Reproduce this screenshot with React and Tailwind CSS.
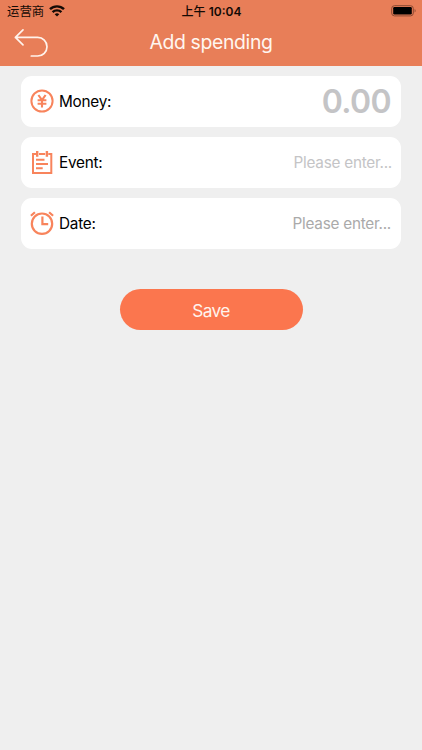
function BackIcon() {
  return (
    <svg className="block h-[30px] w-[36px]" viewBox="0 0 36 30" fill="none" stroke="#fff3ec" strokeWidth="1.7" strokeLinecap="round" strokeLinejoin="round">
      <path d="M9 1.8 1.4 9.4l7.6 7.4M1.4 9.4H23.7a9.3 9.3 0 0 1 0 18.6h-6.4" />
    </svg>
  );
}

function WifiIcon() {
  return (
    <svg className="ml-[5px] block h-[12px] w-[16px]" viewBox="0 0 16 12" fill="none" stroke="#140a05" strokeWidth="2.4">
      <path d="M1 4.2a10 10 0 0 1 14 0" />
      <path d="M3.6 7.2a6.2 6.2 0 0 1 8.8 0" />
      <path d="M8 11.6 5.7 9.3a3.3 3.3 0 0 1 4.6 0Z" fill="#140a05" stroke="none" />
    </svg>
  );
}

function BatteryIcon() {
  return (
    <svg className="block h-[12px] w-[26px]" viewBox="0 0 26 12">
      <rect x="1.7" y="0.7" width="21.6" height="10.2" rx="2.8" fill="none" stroke="#8b4932" />
      <rect x="3.2" y="2.1" width="18.6" height="7.4" rx="1.2" fill="#000" />
      <path d="M24.6 4.1c1.4.6 1.4 2.8 0 3.4Z" fill="#8b4932" />
    </svg>
  );
}

function MoneyIcon() {
  return (
    <svg className="block size-6" viewBox="0 0 24 24" fill="none" stroke="#f8845c" strokeWidth="2">
      <circle cx="12" cy="12" r="10.6" />
      <path d="m8.4 6 3.6 5.2L15.6 6M12 11v7.4M7.6 11.3h8.8M7.6 14.8h8.8" strokeWidth="2.1" />
    </svg>
  );
}

function EventIcon() {
  return (
    <svg className="block size-6" viewBox="0 0 24 24" fill="none" stroke="#f8845c" strokeWidth="2">
      <path d="M6 4H3v19h18.3V4h-3M9 4h6.2" />
      <path d="M7.2 1v5.8M16.9 1v5.8" strokeWidth="2.4" />
      <path d="M6 9.8h8.5M6 14h12M6 18.2h6.7" strokeWidth="2" />
    </svg>
  );
}

function ClockIcon() {
  return (
    <svg className="block size-6" viewBox="0 0 24 24" fill="none" stroke="#f8845c" strokeWidth="2.2">
      <circle cx="12" cy="12.7" r="10.2" />
      <path d="M12.4 5.4v7.8h5.8" />
      <path d="M.9 4.8 4.9 1.2M19.1 1.2l4 3.6" />
    </svg>
  );
}

function Row({ icon, label, children }) {
  return (
    <div className="flex h-[51px] items-center rounded-[11px] bg-white pr-[10px] pl-[9px]">
      {icon}
      <span className="ml-[5px] pt-[2px] text-[15.3px] leading-5 tracking-[-0.25px] text-black">{label}</span>
      <div className="ml-auto flex items-center pt-[2px]">{children}</div>
    </div>
  );
}

export default function App() {
  return (
    <div className="flex h-[750px] w-full flex-col overflow-hidden bg-[#efefef] font-['Inter','Noto_Sans_CJK_SC',sans-serif]">
      <header className="h-[65.5px] bg-[#e87e58]">
        <div className="grid h-[22px] grid-cols-3 items-center pr-[6px] pl-[7px] text-[12px] leading-4 text-[#140a05]">
          <div className="flex items-center">
            <span className="pt-px text-[12.4px]">运营商</span>
            <WifiIcon />
          </div>
          <div className="pt-px text-center font-semibold whitespace-nowrap">
            <span className="font-medium">上午</span> 10:04
          </div>
          <div className="flex justify-end">
            <BatteryIcon />
          </div>
        </div>
        <div className="grid h-[42px] grid-cols-[1fr_auto_1fr] items-center px-[13.5px]">
          <BackIcon />
          <h1 className="pb-[2px] text-[19.4px] leading-6 font-normal tracking-[-0.35px] text-[#fff6f0]">Add spending</h1>
          <span />
        </div>
      </header>
      <main className="flex flex-col gap-[10px] px-[21px] pt-[10px]">
        <Row icon={<MoneyIcon />} label="Money:">
          <span className="text-[32px] leading-9 font-semibold tracking-[-0.6px] text-[#c4c4c6]">0.00</span>
        </Row>
        <Row icon={<EventIcon />} label="Event:">
          <span className="-mr-px text-[15.3px] leading-5 tracking-[-0.25px] text-[#c4c4c6]">Please enter...</span>
        </Row>
        <Row icon={<ClockIcon />} label="Date:">
          <span className="text-[15.3px] leading-5 tracking-[-0.25px] text-[#aaaaaa]">Please enter...</span>
        </Row>
        <button className="mt-[30.5px] h-[41px] w-[183px] self-center rounded-full bg-[#fb764e] pt-[2px] text-[17.3px] leading-6 tracking-[-0.6px] text-[#fff3ec]">Save</button>
      </main>
    </div>
  );
}
